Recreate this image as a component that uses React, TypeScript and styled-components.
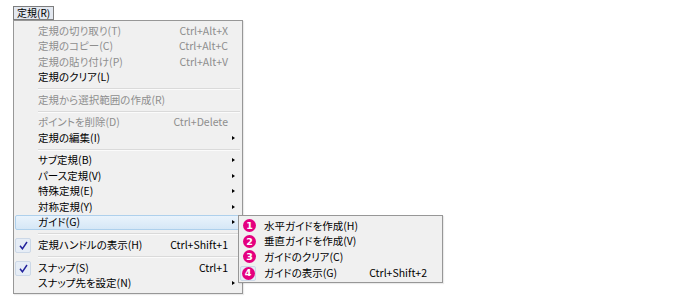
import React from 'react';
import styled, { createGlobalStyle, css } from 'styled-components';

const GlobalStyle = createGlobalStyle`
  body {
    margin: 0;
    background: #ffffff;
    font-family: "Noto Sans CJK JP", "Noto Sans", sans-serif;
    font-size: 10.5px;
    font-feature-settings: "palt";
    color: #000;
  }
`;

const Page = styled.div`
  padding: 5px 0 0 13px;
  width: 696px;
  height: 300px;
  box-sizing: border-box;
`;

const MenuBarItem = styled.div`
  display: inline-flex;
  align-items: center;
  height: 14px;
  padding: 0 3px;
  box-sizing: border-box;
  border: 1px solid #7d7d7d;
  background: #e3e8f0;
  font-size: 10px;
  line-height: 1;
`;

const MenuArea = styled.div`
  position: relative;
  width: 230px;
`;

const MenuPanel = styled.div<{ $width: number }>`
  width: ${(p) => p.$width}px;
  box-sizing: border-box;
  border: 1px solid #979797;
  background: #f0f0f0;
  padding: 2px;
  display: flex;
  flex-direction: column;
  box-shadow: 1px 1px 1px rgba(0, 0, 0, 0.08);
`;

const SubPanel = styled(MenuPanel)`
  position: absolute;
  left: 225px;
  top: 195px;
`;

const Row = styled.div<{ $disabled?: boolean; $hover?: boolean; $icon: number; $right: number }>`
  display: grid;
  grid-template-columns: ${(p) => p.$icon}px 1fr auto ${(p) => p.$right}px;
  align-items: center;
  height: 15.5px;
  box-sizing: border-box;
  color: ${(p) => (p.$disabled ? '#8e8e8e' : '#000')};
  white-space: nowrap;
  border: 1px solid transparent;
  margin: 0 -1px 0 -1px;
  ${(p) =>
    p.$hover &&
    css`
      border-color: #aed0ec;
      border-radius: 2px;
      background: linear-gradient(#e9f3fc, #d6e7f6);
    `}
`;

const Label = styled.span`
  line-height: 1;
`;

const Shortcut = styled.span`
  line-height: 1;
  text-align: right;
`;

const ArrowCell = styled.span`
  display: flex;
  align-items: center;
  padding-left: 4px;
`;

const Arrow = styled.span`
  width: 0;
  height: 0;
  border-top: 2.5px solid transparent;
  border-bottom: 2.5px solid transparent;
  border-left: 3px solid #000;
`;

const IconCell = styled.span`
  display: flex;
  align-items: center;
  height: 100%;
`;

const CheckBox = styled.span`
  display: flex;
  align-items: center;
  justify-content: center;
  width: 16px;
  height: 15px;
  box-sizing: border-box;
  border: 1px solid #ccd8e7;
  border-radius: 2px;
  background: #e6edf6;
  margin-left: -1px;
`;

const Badge = styled.span`
  display: flex;
  align-items: center;
  justify-content: center;
  width: 13px;
  height: 13px;
  border-radius: 50%;
  background: #e4007f;
  color: #fff;
  font-family: "DejaVu Sans", sans-serif;
  font-weight: bold;
  font-size: 9.5px;
  line-height: 1;
`;

const Separator = styled.div<{ $indent: number }>`
  height: 7px;
  display: flex;
  align-items: center;
  padding-left: ${(p) => p.$indent}px;

  &::after {
    content: '';
    flex: 1;
    height: 1px;
    background: #dadada;
    box-shadow: 0 1px 0 #fbfbfb;
  }
`;

const CheckMark = () => (
  <svg width="9" height="9" viewBox="0 0 9 9">
    <path d="M1 4.8 L3.4 7.8 L8 1" fill="none" stroke="#22229c" strokeWidth="1.5" />
  </svg>
);

type Item =
  | { sep: true }
  | {
      sep?: false;
      label: string;
      shortcut?: string;
      disabled?: boolean;
      sub?: boolean;
      checked?: boolean;
      hover?: boolean;
    };

const mainItems: Item[] = [
  { label: '定規の切り取り(T)', shortcut: 'Ctrl+Alt+X', disabled: true },
  { label: '定規のコピー(C)', shortcut: 'Ctrl+Alt+C', disabled: true },
  { label: '定規の貼り付け(P)', shortcut: 'Ctrl+Alt+V', disabled: true },
  { label: '定規のクリア(L)' },
  { sep: true },
  { label: '定規から選択範囲の作成(R)', disabled: true },
  { sep: true },
  { label: 'ポイントを削除(D)', shortcut: 'Ctrl+Delete', disabled: true },
  { label: '定規の編集(I)', sub: true },
  { sep: true },
  { label: 'サブ定規(B)', sub: true },
  { label: 'パース定規(V)', sub: true },
  { label: '特殊定規(E)', sub: true },
  { label: '対称定規(Y)', sub: true },
  { label: 'ガイド(G)', sub: true, hover: true },
  { sep: true },
  { label: '定規ハンドルの表示(H)', shortcut: 'Ctrl+Shift+1', checked: true },
  { sep: true },
  { label: 'スナップ(S)', shortcut: 'Ctrl+1', checked: true },
  { label: 'スナップ先を設定(N)', sub: true },
];

const guideItems = [
  { label: '水平ガイドを作成(H)' },
  { label: '垂直ガイドを作成(V)' },
  { label: 'ガイドのクリア(C)' },
  { label: 'ガイドの表示(G)', shortcut: 'Ctrl+Shift+2', checked: true },
];

const App: React.FC = () => {
  return (
    <Page>
      <GlobalStyle />
      <MenuBarItem>定規(R)</MenuBarItem>
      <MenuArea>
        <MenuPanel $width={230}>
          {mainItems.map((item, i) =>
            item.sep ? (
              <Separator key={i} $indent={22} />
            ) : (
              <Row key={i} $disabled={item.disabled} $hover={item.hover} $icon={22} $right={12}>
                <IconCell>
                  {item.checked && (
                    <CheckBox>
                      <CheckMark />
                    </CheckBox>
                  )}
                </IconCell>
                <Label>{item.label}</Label>
                <Shortcut>{item.shortcut}</Shortcut>
                <ArrowCell>{item.sub && <Arrow />}</ArrowCell>
              </Row>
            )
          )}
        </MenuPanel>
        <SubPanel $width={205}>
          {guideItems.map((item, i) => (
            <Row key={i} $icon={23} $right={13}>
              <IconCell>
                {item.checked ? (
                  <CheckBox>
                    <Badge>{i + 1}</Badge>
                  </CheckBox>
                ) : (
                  <Badge style={{ marginLeft: 2 }}>{i + 1}</Badge>
                )}
              </IconCell>
              <Label>{item.label}</Label>
              <Shortcut>{item.shortcut}</Shortcut>
              <span />
            </Row>
          ))}
        </SubPanel>
      </MenuArea>
    </Page>
  );
};

export default App;
